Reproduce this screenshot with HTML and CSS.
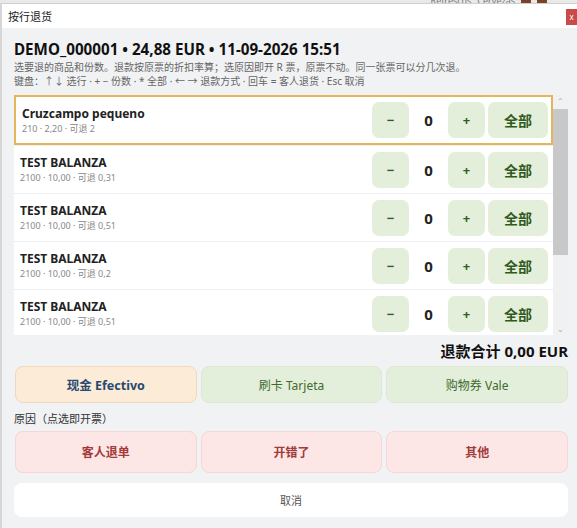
FILE: index.html
```html
<!DOCTYPE html>
<html>
	<head>
		<meta charset="UTF-8">
		<title>按行退货</title>
		<link rel="stylesheet" href="styles.css">
	</head>
	<body>
		<div class="behind">
			<span class="tab">Refrescos</span>
			<span class="tab">Cervezas</span>
			<span class="chip"></span>
			<span class="chip"></span>
		</div>
		<div class="win">
			<div class="titlebar">
				<span class="title">按行退货</span>
				<span class="close">x</span>
			</div>
			<div class="body">
				<div class="head">DEMO_000001 • 24,88 EUR • 11-09-2026 15:51</div>
				<div class="hint">选要退的商品和份数。退款按原票的折扣率算；选原因即开 R 票，原票不动。同一张票可以分几次退。</div>
				<div class="hint">键盘：↑↓ 选行 · + − 份数 · * 全部 · ← → 退款方式 · 回车 = 客人退货 · Esc 取消</div>

				<div class="list">
					<div class="rows">
						<div class="row sel">
							<div class="info">
								<div class="name">Cruzcampo pequeno</div>
								<div class="sub">210 · 2,20 · 可退 2</div>
							</div>
							<div class="btn">−</div>
							<div class="qty">0</div>
							<div class="btn">+</div>
							<div class="btn all">全部</div>
						</div>
						<div class="row">
							<div class="info">
								<div class="name">TEST BALANZA</div>
								<div class="sub">2100 · 10,00 · 可退 0,31</div>
							</div>
							<div class="btn">−</div>
							<div class="qty">0</div>
							<div class="btn">+</div>
							<div class="btn all">全部</div>
						</div>
						<div class="row">
							<div class="info">
								<div class="name">TEST BALANZA</div>
								<div class="sub">2100 · 10,00 · 可退 0,51</div>
							</div>
							<div class="btn">−</div>
							<div class="qty">0</div>
							<div class="btn">+</div>
							<div class="btn all">全部</div>
						</div>
						<div class="row">
							<div class="info">
								<div class="name">TEST BALANZA</div>
								<div class="sub">2100 · 10,00 · 可退 0,2</div>
							</div>
							<div class="btn">−</div>
							<div class="qty">0</div>
							<div class="btn">+</div>
							<div class="btn all">全部</div>
						</div>
						<div class="row">
							<div class="info">
								<div class="name">TEST BALANZA</div>
								<div class="sub">2100 · 10,00 · 可退 0,51</div>
							</div>
							<div class="btn">−</div>
							<div class="qty">0</div>
							<div class="btn">+</div>
							<div class="btn all">全部</div>
						</div>
					</div>
					<div class="scroll">
						<span class="arr">&#8963;</span>
						<div class="track"><div class="thumb"></div></div>
						<span class="arr">&#8964;</span>
					</div>
				</div>

				<div class="total">退款合计 0,00 EUR</div>

				<div class="pay">
					<div class="pbtn cash">现金 Efectivo</div>
					<div class="pbtn">刷卡 Tarjeta</div>
					<div class="pbtn">购物券 Vale</div>
				</div>

				<div class="label">原因（点选即开票）</div>

				<div class="reasons">
					<div class="rbtn">客人退单</div>
					<div class="rbtn">开错了</div>
					<div class="rbtn">其他</div>
				</div>

				<div class="cancel">取消</div>
			</div>
		</div>
	</body>
</html>
```

FILE: styles.css
```css
*{
	box-sizing: border-box;
}
body{
	margin: 0;
	background: #f1f2f4;
	font-family: "Noto Sans", "Noto Sans CJK SC", sans-serif;
	color: #222;
}

/* strip of the window underneath */
.behind{
	height: 3px;
	background: #e9e9e9;
	display: flex;
	justify-content: flex-end;
	gap: 6px;
	padding-right: 30px;
	overflow: hidden;
	font-size: 9px;
	line-height: 0;
	color: #777;
}
.behind .tab{
	line-height: 2px;
}
.behind .chip{
	width: 10px;
	background: #7a4226;
}

.win{
	border-left: 2px solid #d6d6d6;
}
.titlebar{
	height: 25px;
	background: #fff;
	display: flex;
	align-items: center;
	justify-content: space-between;
	padding-left: 6px;
	border-top: 1px solid #cfcfcf;
}
.title{
	font-size: 11px;
	color: #222;
}
.close{
	width: 11px;
	height: 16px;
	background: #c94a4a;
	color: #fff;
	font-size: 8px;
	text-align: center;
	line-height: 16px;
	margin-top: 2px;
}

.body{
	padding: 10px 9px 12px 12px;
}
.head{
	font-size: 15.2px;
	font-weight: 700;
	line-height: 22px;
	color: #111;
}
.hint{
	font-size: 10px;
	line-height: 14px;
	color: #666;
}

/* product rows */
.list{
	margin-top: 7px;
	height: 240px;
	display: flex;
	background: #eceef1;
}
.rows{
	flex: 1;
	display: flex;
	flex-direction: column;
	gap: 1px;
	overflow: hidden;
}
.row{
	flex: none;
	height: 47px;
	background: #fff;
	display: flex;
	align-items: center;
	padding: 0 5px 0 6px;
}
.row.sel{
	height: 50px;
	border: 2px solid #e2b65a;
	padding: 0 3px 0 6px;
}
.info{
	flex: 1;
	min-width: 0;
}
.name{
	font-size: 12px;
	font-weight: 700;
	line-height: 16px;
	color: #222;
}
.sub{
	font-size: 9px;
	line-height: 13px;
	color: #888;
}
.btn{
	width: 37px;
	height: 36px;
	border-radius: 7px;
	background: #e3eedb;
	color: #2f5a20;
	font-weight: 700;
	font-size: 13px;
	display: flex;
	align-items: center;
	justify-content: center;
}
.btn.all{
	width: 60px;
	margin-left: 3px;
	font-size: 14px;
}
.qty{
	width: 39px;
	text-align: center;
	font-size: 15px;
	font-weight: 700;
	color: #222;
}

.scroll{
	width: 15px;
	background: #f1f1f1;
	display: flex;
	flex-direction: column;
	align-items: center;
}
.arr{
	height: 12px;
	font-size: 8px;
	line-height: 12px;
	color: #aaa;
}
.track{
	flex: 1;
	width: 100%;
	padding: 2px 0;
}
.thumb{
	height: 146px;
	background: #c8c8c8;
}

.total{
	text-align: right;
	font-size: 15px;
	font-weight: 700;
	line-height: 20px;
	margin-top: 6px;
	color: #111;
}

.pay, .reasons{
	display: grid;
	grid-template-columns: 1fr 1fr 1fr;
	gap: 4px;
	padding-left: 1px;
}
.pay{
	margin-top: 5px;
}
.pbtn, .rbtn{
	height: 37px;
	border-radius: 8px;
	display: flex;
	align-items: center;
	justify-content: center;
	font-size: 12px;
}
.pbtn{
	background: #e3efdb;
	border: 1px solid #dbe8d2;
	color: #3f6a2c;
}
.pbtn.cash{
	background: #fbebd7;
	border-color: #f0d8b8;
	color: #27496f;
	font-weight: 700;
	font-size: 12.5px;
}
.label{
	font-size: 11px;
	line-height: 16px;
	margin: 8px 0 4px;
	color: #333;
}
.rbtn{
	height: 42px;
	background: #fce6e6;
	border: 1px solid #f6d6d6;
	color: #a23a3a;
	font-weight: 700;
}
.cancel{
	margin-top: 10px;
	height: 34px;
	background: #fff;
	border-radius: 8px;
	display: flex;
	align-items: center;
	justify-content: center;
	font-size: 11px;
	color: #555;
}
```
